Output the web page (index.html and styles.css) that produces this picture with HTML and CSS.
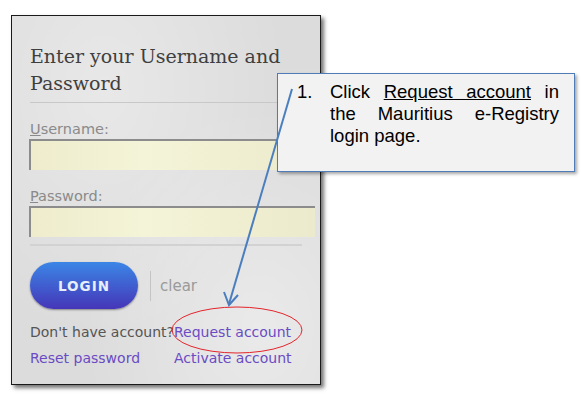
FILE: index.html
```html
<!DOCTYPE html>
<html lang="en">
<head>
    <meta charset="UTF-8">
    <title>Request account</title>
    <link rel="stylesheet" href="styles.css">
</head>
<body>
    <div class="login-panel">
        <h2 class="login-title">Enter your Username and Password</h2>

        <label class="field-label"><u>U</u>sername:</label>
        <div class="field-input"></div>

        <label class="field-label"><u>P</u>assword:</label>
        <div class="field-input"></div>

        <div class="button-row">
            <button class="login-btn">LOGIN</button>
            <span class="clear-link">clear</span>
        </div>

        <div class="link-row first">
            <span class="muted">Don't have account?</span><a class="purple">Request account</a>
        </div>
        <div class="link-row">
            <a class="purple reset">Reset password</a><a class="purple">Activate account</a>
        </div>
    </div>

    <!-- callout note -->
    <div class="callout">
        <span class="callout-num">1.</span>
        <p class="callout-text">Click <u>Request account</u> in the Mauritius e-Registry login page.</p>
    </div>

    <svg class="overlay" width="584" height="400" viewBox="0 0 584 400">
        <ellipse cx="237" cy="330" rx="65" ry="23" fill="none" stroke="#e3242b" stroke-width="1"/>
        <line x1="292" y1="89" x2="229" y2="304" stroke="#4a7ebf" stroke-width="2"/>
        <polyline points="224,292 229,305 238,295" fill="none" stroke="#4a7ebf" stroke-width="2"/>
    </svg>
</body>
</html>
```

FILE: styles.css
```css
body {
    margin: 0;
    width: 584px;
    height: 400px;
    background: white;
    position: relative;
    overflow: hidden;
}
.login-panel {
    margin: 15px 0 0 11px;
    width: 290px;
    height: 341px;
    padding: 27px 0 0 18px;
    border: 1px solid #1a1a1a;
    box-shadow: 3px 3px 4px rgba(0,0,0,0.55);
    background:
        radial-gradient(ellipse at 30% 20%, rgba(255,255,255,0.35), rgba(255,255,255,0) 60%),
        radial-gradient(ellipse at 80% 85%, rgba(255,255,255,0.4), rgba(255,255,255,0) 50%),
        #dcdcdc;
}
.login-title {
    font-family: "DejaVu Serif", serif;
    font-weight: normal;
    font-size: 19px;
    line-height: 27px;
    color: #3f3f3f;
    margin: 0 0 5px 0;
    padding-bottom: 5px;
    border-bottom: 1px solid #c8c8c8;
    width: 284px;
}
.field-label {
    display: block;
    font-family: "DejaVu Sans", sans-serif;
    font-size: 14.5px;
    line-height: 18px;
    color: #8a8a8a;
    margin-top: 17px;
}
.field-input {
    margin: 1px 0 0 -1px;
    width: 284px;
    height: 29px;
    border-top: 2px solid #8c8c8c;
    border-left: 2px solid #8c8c8c;
    background: linear-gradient(90deg, #eeeccc, #f4f4d8 40%, #eceacc);
}
.button-row {
    display: flex;
    align-items: center;
    margin-top: 7px;
    padding-top: 16px;
    border-top: 2px solid #d2d2d2;
    width: 272px;
}
.login-btn {
    width: 108px;
    height: 47px;
    border: none;
    border-radius: 24px;
    background: linear-gradient(#3b86e6, #4536b8);
    box-shadow: 0 1px 2px rgba(0,0,0,0.4);
    color: #e8eefc;
    font-family: "DejaVu Sans", sans-serif;
    font-weight: bold;
    font-size: 13.5px;
    letter-spacing: 1px;
}
.clear-link {
    margin-left: 12px;
    padding-left: 9px;
    border-left: 1px solid #c4c4c4;
    line-height: 30px;
    font-family: "DejaVu Sans", sans-serif;
    font-size: 15px;
    color: #9a9a9a;
}
.link-row {
    font-family: "DejaVu Sans", sans-serif;
    font-size: 14px;
    line-height: 26px;
}
.link-row.first {
    margin-top: 10px;
}
.muted {
    color: #555;
}
.purple {
    color: #6a4bc4;
}
.reset {
    display: inline-block;
    width: 144px;
}
.callout {
    position: absolute;
    left: 277px;
    top: 73px;
    width: 262px;
    height: 84px;
    padding: 7px 15px 6px 19px;
    border: 1px solid #4f7bb6;
    background: #f2f2f2;
    box-shadow: 2px 2px 3px rgba(0,0,0,0.35);
    display: flex;
    font-family: "Liberation Sans", Arial, sans-serif;
    font-size: 18.5px;
    line-height: 22px;
    color: #000;
}
.callout-num {
    width: 33px;
    flex: none;
}
.callout-text {
    margin: 0;
    text-align: justify;
}
.overlay {
    position: absolute;
    left: 0;
    top: 0;
}
```
